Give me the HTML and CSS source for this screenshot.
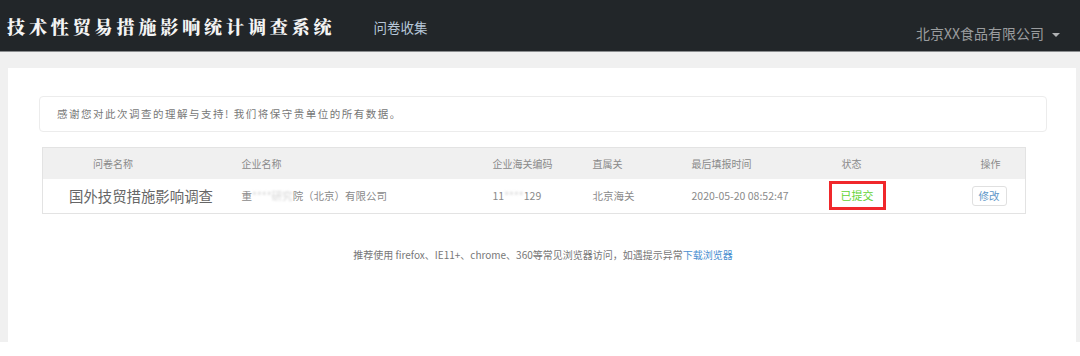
FILE: index.html
```html
<!DOCTYPE html>
<html lang="zh">
<head>
<meta charset="utf-8">
<link rel="stylesheet" href="styles.css">
</head>
<body>
<header class="topbar">
  <div class="brand">技术性贸易措施影响统计调查系统</div>
  <nav class="nav"><a class="nav-item">问卷收集</a></nav>
  <div class="user">北京XX食品有限公司 <span class="caret"></span></div>
</header>
<main class="page">
  <section class="panel">
    <div class="notice">感谢您对此次调查的理解与支持! 我们将保守贵单位的所有数据。</div>
    <table class="grid">
      <thead>
        <tr>
          <th class="c-name">问卷名称</th>
          <th class="c-co">企业名称</th>
          <th class="c-code">企业海关编码</th>
          <th class="c-cus">直属关</th>
          <th class="c-time">最后填报时间</th>
          <th class="c-st">状态</th>
          <th class="c-op">操作</th>
        </tr>
      </thead>
      <tbody>
        <tr>
          <td class="c-name big">国外技贸措施影响调查</td>
          <td class="c-co">重<span class="blur">****研究</span>院（北京）有限公司</td>
          <td class="c-code">11<span class="blur">****</span>129</td>
          <td class="c-cus">北京海关</td>
          <td class="c-time">2020-05-20 08:52:47</td>
          <td class="c-st"><span class="status">已提交</span></td>
          <td class="c-op"><button class="btn">修改</button></td>
        </tr>
      </tbody>
    </table>
    <p class="tip">推荐使用 firefox、IE11+、chrome、360等常见浏览器访问，如遇提示异常<a class="link">下载浏览器</a></p>
  </section>
</main>
</body>
</html>
```
FILE: styles.css
```css
* { box-sizing: border-box; }
html, body { margin: 0; padding: 0; background: #fff; }
body { font-family: "Noto Sans CJK SC", "Liberation Sans", sans-serif; color: #555; }

.topbar {
  height: 52px;
  background: #222629;
  border-bottom: 1px solid #8a8d8f;
  display: flex;
  align-items: center;
  padding: 0 0 0 7px;
}
.brand {
  font-family: "Noto Serif CJK SC", "Noto Sans CJK SC", serif;
  font-weight: 900;
  font-size: 18px;
  letter-spacing: 3.9px;
  color: #f4f4f4;
  margin-top: 0;
}
.nav { margin-left: 38px; }
.nav-item { font-size: 13.5px; color: #b6c6d8; }
.user {
  margin-left: auto;
  margin-right: 20px;
  margin-top: 14px;
  font-size: 14px;
  color: #9a9c9e;
  display: flex;
  align-items: center;
}
.caret {
  display: inline-block;
  margin-left: 8px;
  margin-top: 4px;
  width: 0; height: 0;
  border-left: 4px solid transparent;
  border-right: 4px solid transparent;
  border-top: 4px solid #b0b2b4;
}

.page {
  background: #f0f0f0;
  padding: 16px 4px 0 8px;
  height: 290px;
}
.panel {
  background: #fff;
  height: 274px;
  padding: 28px 29px 0 31px;
}
.notice {
  height: 36px;
  border: 1px solid #ececec;
  border-radius: 4px;
  font-size: 10.5px;
  color: #777;
  padding: 0 0 0 17px;
  line-height: 34px;
  letter-spacing: 1.5px;
}
.grid {
  margin: 15px 0 0 3px;
  width: 984px;
  table-layout: fixed;
  border-collapse: collapse;
  border: 1px solid #e3e3e3;
  font-size: 10.5px;
  color: #888;
}
.grid th {
  background: #f0f0f0;
  font-weight: normal;
  font-size: 10px;
  color: #8a8a8a;
  height: 31px;
  text-align: left;
  padding: 0 0 0 8px;
}
.grid td { height: 35px; padding: 0 0 0 8px; color: #8a8a8a; text-align: left; white-space: nowrap; }
.grid .c-name { width: 191px; }
.grid th.c-name { padding-left: 50px; }
.grid td.big { font-size: 14.4px; color: #666; padding-left: 26px; }
.grid .c-co { width: 251px; }
.grid .c-code { width: 100px; }
.grid .c-cus { width: 99px; }
.grid .c-time { width: 137px; }
.grid .c-st { width: 129px; }
.grid th.c-st { padding-left: 21px; }
.grid td.c-st { padding-left: 8px; }
.grid th.c-op { padding-left: 31px; }
.grid td.c-op { padding-left: 22px; }
.blur { color: #d4d4d4; filter: blur(1px); }
.status {
  display: inline-block;
  width: 57px;
  height: 29px;
  line-height: 23px;
  text-align: center;
  border: 3px solid #f0282b;
  color: #62d334;
  font-size: 11px;
}
.btn {
  font-family: inherit;
  font-size: 10.5px;
  color: #5e96c8;
  background: #fff;
  border: 1px solid #e0e0e0;
  border-radius: 3px;
  width: 35px;
  height: 20px;
  padding: 0;
}
.tip {
  margin: 33px 0 0 0;
  text-align: center;
  font-size: 10px;
  color: #777;
}
.link { color: #4a8ed0; }
```
